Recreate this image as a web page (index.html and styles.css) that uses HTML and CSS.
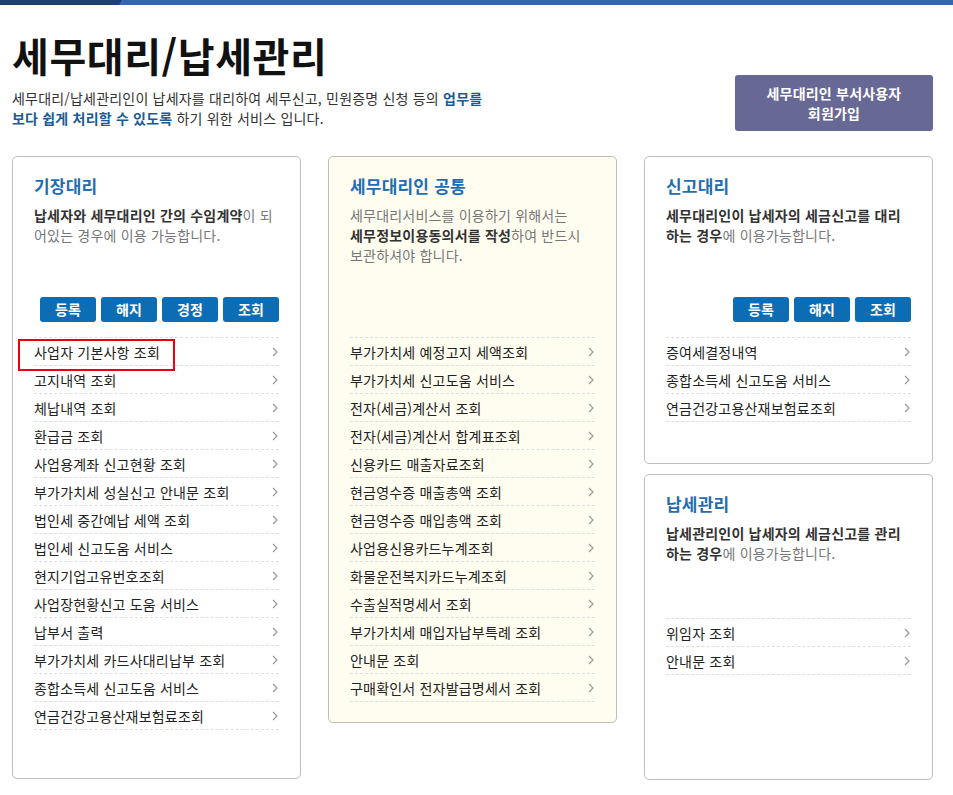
FILE: index.html
```html
<!DOCTYPE html>
<html lang="ko">
<head>
<meta charset="utf-8">
<title>세무대리/납세관리</title>
<link rel="stylesheet" href="styles.css">
</head>
<body>
<div class="topbar"><div class="topbar-dark"></div></div>
<div class="page">
  <header class="header">
    <div class="intro">
      <h1 class="title">세무대리/납세관리</h1>
      <p class="lead">세무대리/납세관리인이 납세자를 대리하여 세무신고, 민원증명 신청 등의 <strong>업무를</strong><br><strong>보다 쉽게 처리할 수 있도록</strong> 하기 위한 서비스 입니다.</p>
    </div>
    <a class="join-btn" href="#">세무대리인 부서사용자<br>회원가입</a>
  </header>

  <div class="grid">
    <section class="card card-1">
      <div class="card-head">
        <h2 class="card-title">기장대리</h2>
        <p class="card-desc"><b>납세자와 세무대리인 간의 수임계약</b>이 되<br>어있는 경우에 이용 가능합니다.</p>
      </div>
      <div class="btns">
        <a class="btn" href="#">등록</a><a class="btn" href="#">해지</a><a class="btn" href="#">경정</a><a class="btn" href="#">조회</a>
      </div>
      <ul class="list">
        <li class="item"><span>사업자 기본사항 조회</span><span class="mark"></span><svg class="chev" viewBox="0 0 6 10"><polyline points="1,1 5,5 1,9"/></svg></li>
        <li class="item"><span>고지내역 조회</span><svg class="chev" viewBox="0 0 6 10"><polyline points="1,1 5,5 1,9"/></svg></li>
        <li class="item"><span>체납내역 조회</span><svg class="chev" viewBox="0 0 6 10"><polyline points="1,1 5,5 1,9"/></svg></li>
        <li class="item"><span>환급금 조회</span><svg class="chev" viewBox="0 0 6 10"><polyline points="1,1 5,5 1,9"/></svg></li>
        <li class="item"><span>사업용계좌 신고현황 조회</span><svg class="chev" viewBox="0 0 6 10"><polyline points="1,1 5,5 1,9"/></svg></li>
        <li class="item"><span>부가가치세 성실신고 안내문 조회</span><svg class="chev" viewBox="0 0 6 10"><polyline points="1,1 5,5 1,9"/></svg></li>
        <li class="item"><span>법인세 중간예납 세액 조회</span><svg class="chev" viewBox="0 0 6 10"><polyline points="1,1 5,5 1,9"/></svg></li>
        <li class="item"><span>법인세 신고도움 서비스</span><svg class="chev" viewBox="0 0 6 10"><polyline points="1,1 5,5 1,9"/></svg></li>
        <li class="item"><span>현지기업고유번호조회</span><svg class="chev" viewBox="0 0 6 10"><polyline points="1,1 5,5 1,9"/></svg></li>
        <li class="item"><span>사업장현황신고 도움 서비스</span><svg class="chev" viewBox="0 0 6 10"><polyline points="1,1 5,5 1,9"/></svg></li>
        <li class="item"><span>납부서 출력</span><svg class="chev" viewBox="0 0 6 10"><polyline points="1,1 5,5 1,9"/></svg></li>
        <li class="item"><span>부가가치세 카드사대리납부 조회</span><svg class="chev" viewBox="0 0 6 10"><polyline points="1,1 5,5 1,9"/></svg></li>
        <li class="item"><span>종합소득세 신고도움 서비스</span><svg class="chev" viewBox="0 0 6 10"><polyline points="1,1 5,5 1,9"/></svg></li>
        <li class="item"><span>연금건강고용산재보험료조회</span><svg class="chev" viewBox="0 0 6 10"><polyline points="1,1 5,5 1,9"/></svg></li>
      </ul>
    </section>

    <section class="card card-2">
      <div class="card-head card-head-tall">
        <h2 class="card-title">세무대리인 공통</h2>
        <p class="card-desc">세무대리서비스를 이용하기 위해서는<br><b>세무정보이용동의서를 작성</b>하여 반드시<br>보관하셔야 합니다.</p>
      </div>
      <ul class="list">
        <li class="item"><span>부가가치세 예정고지 세액조회</span><svg class="chev" viewBox="0 0 6 10"><polyline points="1,1 5,5 1,9"/></svg></li>
        <li class="item"><span>부가가치세 신고도움 서비스</span><svg class="chev" viewBox="0 0 6 10"><polyline points="1,1 5,5 1,9"/></svg></li>
        <li class="item"><span>전자(세금)계산서 조회</span><svg class="chev" viewBox="0 0 6 10"><polyline points="1,1 5,5 1,9"/></svg></li>
        <li class="item"><span>전자(세금)계산서 합계표조회</span><svg class="chev" viewBox="0 0 6 10"><polyline points="1,1 5,5 1,9"/></svg></li>
        <li class="item"><span>신용카드 매출자료조회</span><svg class="chev" viewBox="0 0 6 10"><polyline points="1,1 5,5 1,9"/></svg></li>
        <li class="item"><span>현금영수증 매출총액 조회</span><svg class="chev" viewBox="0 0 6 10"><polyline points="1,1 5,5 1,9"/></svg></li>
        <li class="item"><span>현금영수증 매입총액 조회</span><svg class="chev" viewBox="0 0 6 10"><polyline points="1,1 5,5 1,9"/></svg></li>
        <li class="item"><span>사업용신용카드누계조회</span><svg class="chev" viewBox="0 0 6 10"><polyline points="1,1 5,5 1,9"/></svg></li>
        <li class="item"><span>화물운전복지카드누계조회</span><svg class="chev" viewBox="0 0 6 10"><polyline points="1,1 5,5 1,9"/></svg></li>
        <li class="item"><span>수출실적명세서 조회</span><svg class="chev" viewBox="0 0 6 10"><polyline points="1,1 5,5 1,9"/></svg></li>
        <li class="item"><span>부가가치세 매입자납부특례 조회</span><svg class="chev" viewBox="0 0 6 10"><polyline points="1,1 5,5 1,9"/></svg></li>
        <li class="item"><span>안내문 조회</span><svg class="chev" viewBox="0 0 6 10"><polyline points="1,1 5,5 1,9"/></svg></li>
        <li class="item"><span>구매확인서 전자발급명세서 조회</span><svg class="chev" viewBox="0 0 6 10"><polyline points="1,1 5,5 1,9"/></svg></li>
      </ul>
    </section>

    <div class="col">
      <section class="card card-3">
        <div class="card-head">
          <h2 class="card-title">신고대리</h2>
          <p class="card-desc"><b>세무대리인이 납세자의 세금신고를 대리<br>하는 경우</b>에 이용가능합니다.</p>
        </div>
        <div class="btns">
          <a class="btn" href="#">등록</a><a class="btn" href="#">해지</a><a class="btn" href="#">조회</a>
        </div>
        <ul class="list">
          <li class="item"><span>증여세결정내역</span><svg class="chev" viewBox="0 0 6 10"><polyline points="1,1 5,5 1,9"/></svg></li>
          <li class="item"><span>종합소득세 신고도움 서비스</span><svg class="chev" viewBox="0 0 6 10"><polyline points="1,1 5,5 1,9"/></svg></li>
          <li class="item"><span>연금건강고용산재보험료조회</span><svg class="chev" viewBox="0 0 6 10"><polyline points="1,1 5,5 1,9"/></svg></li>
        </ul>
      </section>
      <section class="card card-4">
        <div class="card-head card-head-mid">
          <h2 class="card-title">납세관리</h2>
          <p class="card-desc"><b>납세관리인이 납세자의 세금신고를 관리<br>하는 경우</b>에 이용가능합니다.</p>
        </div>
        <ul class="list">
          <li class="item"><span>위임자 조회</span><svg class="chev" viewBox="0 0 6 10"><polyline points="1,1 5,5 1,9"/></svg></li>
          <li class="item"><span>안내문 조회</span><svg class="chev" viewBox="0 0 6 10"><polyline points="1,1 5,5 1,9"/></svg></li>
        </ul>
      </section>
    </div>
  </div>
</div>
</body>
</html>
```
FILE: styles.css
```css
* { box-sizing: border-box; }
html, body { margin: 0; padding: 0; background: #fff; }
body {
  font-family: "Noto Sans CJK KR", "Noto Sans", sans-serif;
  color: #222;
  font-size: 14px;
}
.topbar {
  height: 5px;
  background: #3668a6;
  position: relative;
}
.topbar-dark {
  width: 122px;
  height: 5px;
  background: #1f3f6e;
  clip-path: polygon(0 0, 100% 0, calc(100% - 3px) 100%, 0 100%);
}
.page { padding: 0 20px 0 12px; }
.header {
  display: flex;
  justify-content: space-between;
  align-items: flex-end;
}
.title {
  margin: 26px 0 0;
  font-size: 40px;
  line-height: 48px;
  font-weight: 700;
  color: #111;
  letter-spacing: 0.6px;
}
.lead {
  margin: 9px 0 0;
  font-size: 14px;
  line-height: 20px;
  color: #333;
  letter-spacing: 0.2px;
}
.lead strong { color: #1b5b95; font-weight: 700; }
.join-btn {
  width: 198px;
  height: 56px;
  margin-bottom: -3px;
  display: flex;
  align-items: center;
  justify-content: center;
  text-align: center;
  background: #686895;
  border-radius: 3px;
  color: #fff;
  font-weight: 700;
  font-size: 14px;
  line-height: 20px;
  text-decoration: none;
  letter-spacing: 0.2px;
}
.grid {
  display: grid;
  grid-template-columns: 289px 289px 289px;
  column-gap: 27px;
  align-items: start;
  margin-top: 28px;
}
.col { display: flex; flex-direction: column; gap: 10px; }
.card {
  border: 1px solid #bdbdbd;
  border-radius: 5px;
  padding: 17px 21px 0 21px;
  background: #fff;
}
.card-1 { height: 623px; }
.card-2 { height: 567px; background: #fffdf0; }
.card-3 { height: 308px; }
.card-4 { height: 306px; }
.card-head { height: 123px; }
.card-head-tall { height: 163px; }
.card-head-mid { height: 126px; }
.card-title {
  margin: 0;
  font-size: 17px;
  line-height: 24px;
  font-weight: 700;
  color: #1f6db5;
  letter-spacing: 0.2px;
}
.card-desc {
  margin: 7px 0 0;
  font-size: 14px;
  line-height: 20px;
  color: #777;
  letter-spacing: 0.2px;
}
.card-desc b { color: #333; font-weight: 700; }
.btns {
  display: flex;
  justify-content: flex-end;
  gap: 5px;
  height: 25px;
  margin-bottom: 15px;
}
.btn {
  width: 56px;
  height: 25px;
  border-radius: 3px;
  background: #0c6db5;
  color: #fff;
  font-weight: 700;
  font-size: 14px;
  line-height: 25px;
  text-align: center;
  text-decoration: none;
}
.list {
  list-style: none;
  margin: 0;
  padding: 0;
  border-bottom: 1px dashed #dedede;
}
.item {
  position: relative;
  height: 28px;
  border-top: 1px dashed #dedede;
  display: flex;
  align-items: center;
  justify-content: space-between;
  font-size: 14px;
  color: #222;
  letter-spacing: 0.2px;
}
.chev {
  width: 6px;
  height: 10px;
  margin-right: 1px;
  fill: none;
  stroke: #999;
  stroke-width: 1.2;
}
.mark {
  position: absolute;
  left: -16px;
  top: 1px;
  width: 157px;
  height: 32px;
  border: 2px solid #e8000b;
}
```
